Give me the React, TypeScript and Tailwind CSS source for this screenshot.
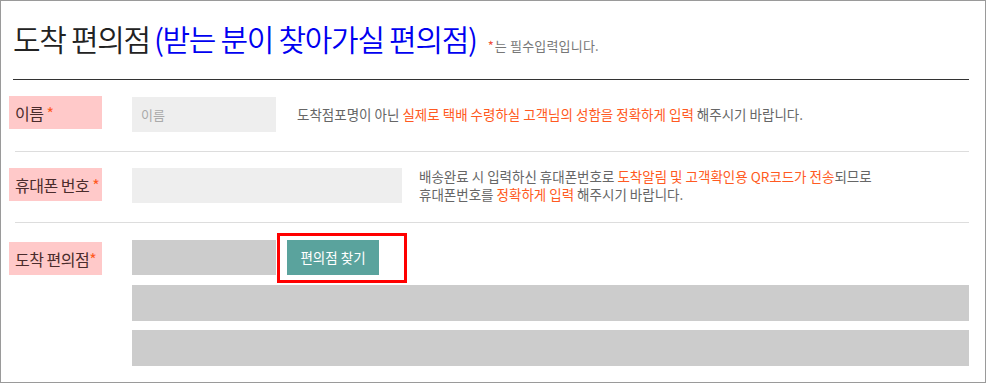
import React from "react";

const font = { fontFamily: '"Noto Sans CJK KR", "Noto Sans", sans-serif' };

function Label({ children }: { children: React.ReactNode }) {
  return (
    <div className="w-[93px] h-[33px] bg-[#ffc9c9] flex items-center pl-[6px] text-[16px] text-[#4a2c2c] tracking-[-0.5px] shrink-0">
      {children}
    </div>
  );
}

const O = ({ children }: { children: React.ReactNode }) => (
  <span className="text-[#ff5a22]">{children}</span>
);

export default function App() {
  return (
    <div
      className="w-[986px] h-[383px] border border-[#9a9a9a] bg-white relative overflow-hidden"
      style={font}
    >
      <div className="pl-[12px] pr-[16px]">
        <div className="h-[78px] flex items-end pb-[23px]">
          <div className="flex items-baseline">
            <span className="text-[30px] leading-[36px] font-[350] text-[#222] tracking-[-1.3px]">도착 편의점</span>
            <span className="text-[30px] leading-[36px] font-[350] text-[#0000f0] tracking-[-1.3px] ml-[4px]">(받는 분이 찾아가실 편의점)</span>
            <span className="text-[13px] text-[#f0503a] ml-[11px]">*</span>
            <span className="text-[13px] text-[#777] tracking-[0.2px] ml-[1px]">는 필수입력입니다.</span>
          </div>
        </div>
        <div className="h-px bg-[#333]" />
      </div>

      {/* Row 1 */}
      <div className="h-[71px] flex items-start pt-[16px] pl-[8px]">
        <Label>
          이름<span className="text-[#ff5a22] ml-[3px]">*</span>
        </Label>
        <div className="ml-[30px] mt-[1px] w-[144px] h-[35px] bg-[#eeeeee] flex items-center pl-[9px] text-[13px] text-[#aaa]">
          이름
        </div>
        <div className="ml-[21px] mt-[9px] text-[13.5px] text-[#666] leading-[18px]">
          도착점포명이 아닌 <O>실제로 택배 수령하실 고객님의 성함을 정확하게 입력</O> 해주시기 바랍니다.
        </div>
      </div>
      <div className="ml-[14px] mr-[16px] h-px bg-[#dddddd]" />

      {/* Row 2 */}
      <div className="h-[70px] flex items-start pt-[16px] pl-[8px]">
        <Label>
          휴대폰 번호<span className="text-[#ff5a22] ml-[3px]">*</span>
        </Label>
        <div className="ml-[30px] w-[270px] h-[35px] bg-[#eeeeee]" />
        <div className="ml-[17px] mt-[-1px] text-[13.5px] text-[#666] leading-[18px]">
          <div>
            배송완료 시 입력하신 휴대폰번호로 <O>도착알림 및 고객확인용 QR코드가 전송</O>되므로
          </div>
          <div>
            휴대폰번호를 <O>정확하게 입력</O> 해주시기 바랍니다.
          </div>
        </div>
      </div>
      <div className="ml-[14px] mr-[16px] h-px bg-[#dddddd]" />

      {/* Row 3 */}
      <div className="flex items-start pt-[17px] pl-[8px]">
        <div className="mt-[2px]">
          <Label>
            도착 편의점<span className="text-[#ff5a22]">*</span>
          </Label>
        </div>
        <div className="ml-[30px] flex flex-col w-[837px]">
          <div className="flex items-center relative">
            <div className="w-[144px] h-[35px] bg-[#cccccc]" />
            <button className="ml-[11px] w-[92px] h-[35px] bg-[#5aa39d] text-white text-[13.5px] flex items-center justify-center">
              편의점 찾기
            </button>
            <div className="absolute left-[145px] top-[-7px] w-[130px] h-[50px] border-[3px] border-[#ff0000] pointer-events-none" />
          </div>
          <div className="mt-[10px] h-[36px] bg-[#cccccc]" />
          <div className="mt-[9px] h-[36px] bg-[#cccccc]" />
        </div>
      </div>
    </div>
  );
}
